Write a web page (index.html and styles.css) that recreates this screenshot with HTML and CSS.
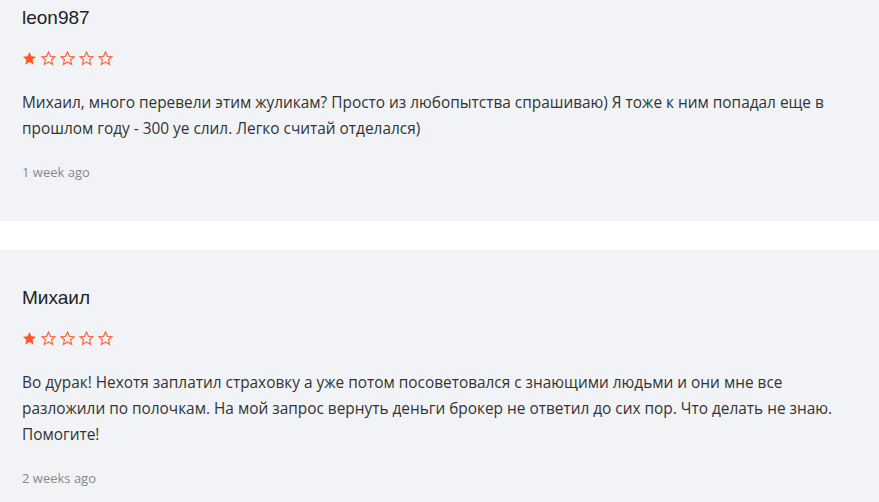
FILE: index.html
```html
<!DOCTYPE html>
<html lang="ru">
<head>
<meta charset="utf-8">
<link rel="stylesheet" href="styles.css">
</head>
<body>
<div class="list">
  <div class="review first">
    <div class="name">leon987</div>
    <div class="stars">
      <svg class="star" viewBox="0 0 24 24"><path class="full" d="M12 1.5l3.1 7 7.4.7-5.6 4.9 1.7 7.4L12 17.6l-6.6 3.9 1.7-7.4L1.5 9.2l7.4-.7z"/></svg>
      <svg class="star" viewBox="0 0 24 24"><path class="empty" d="M12 1.5l3.1 7 7.4.7-5.6 4.9 1.7 7.4L12 17.6l-6.6 3.9 1.7-7.4L1.5 9.2l7.4-.7z"/></svg>
      <svg class="star" viewBox="0 0 24 24"><path class="empty" d="M12 1.5l3.1 7 7.4.7-5.6 4.9 1.7 7.4L12 17.6l-6.6 3.9 1.7-7.4L1.5 9.2l7.4-.7z"/></svg>
      <svg class="star" viewBox="0 0 24 24"><path class="empty" d="M12 1.5l3.1 7 7.4.7-5.6 4.9 1.7 7.4L12 17.6l-6.6 3.9 1.7-7.4L1.5 9.2l7.4-.7z"/></svg>
      <svg class="star" viewBox="0 0 24 24"><path class="empty" d="M12 1.5l3.1 7 7.4.7-5.6 4.9 1.7 7.4L12 17.6l-6.6 3.9 1.7-7.4L1.5 9.2l7.4-.7z"/></svg>
    </div>
    <p class="text">Михаил, много перевели этим жуликам? Просто из любопытства спрашиваю) Я тоже к ним попадал еще в прошлом году - 300 уе слил. Легко считай отделался)</p>
    <div class="date">1 week ago</div>
  </div>
  <div class="review">
    <div class="name">Михаил</div>
    <div class="stars">
      <svg class="star" viewBox="0 0 24 24"><path class="full" d="M12 1.5l3.1 7 7.4.7-5.6 4.9 1.7 7.4L12 17.6l-6.6 3.9 1.7-7.4L1.5 9.2l7.4-.7z"/></svg>
      <svg class="star" viewBox="0 0 24 24"><path class="empty" d="M12 1.5l3.1 7 7.4.7-5.6 4.9 1.7 7.4L12 17.6l-6.6 3.9 1.7-7.4L1.5 9.2l7.4-.7z"/></svg>
      <svg class="star" viewBox="0 0 24 24"><path class="empty" d="M12 1.5l3.1 7 7.4.7-5.6 4.9 1.7 7.4L12 17.6l-6.6 3.9 1.7-7.4L1.5 9.2l7.4-.7z"/></svg>
      <svg class="star" viewBox="0 0 24 24"><path class="empty" d="M12 1.5l3.1 7 7.4.7-5.6 4.9 1.7 7.4L12 17.6l-6.6 3.9 1.7-7.4L1.5 9.2l7.4-.7z"/></svg>
      <svg class="star" viewBox="0 0 24 24"><path class="empty" d="M12 1.5l3.1 7 7.4.7-5.6 4.9 1.7 7.4L12 17.6l-6.6 3.9 1.7-7.4L1.5 9.2l7.4-.7z"/></svg>
    </div>
    <p class="text">Во дурак! Нехотя заплатил страховку а уже потом посоветовался с знающими людьми и они мне все разложили по полочкам. На мой запрос вернуть деньги брокер не ответил до сих пор. Что делать не знаю. Помогите!</p>
    <div class="date">2 weeks ago</div>
  </div>
</div>
</body>
</html>
```
FILE: styles.css
```css
html, body {
  margin: 0;
  padding: 0;
  background: #ffffff;
}
.list {
  display: flex;
  flex-direction: column;
  gap: 29px;
}
.review {
  background: #f2f3f7;
  padding: 36px 35px 40px 22px;
}
.review.first {
  padding-top: 6px;
}
.name {
  font-family: "Liberation Sans", Arial, sans-serif;
  font-size: 19px;
  line-height: 24px;
  color: #222222;
}
.stars {
  display: flex;
  gap: 4px;
  margin-top: 21px;
  height: 15px;
}
.star {
  width: 15px;
  height: 15px;
  display: block;
}
.full {
  fill: #fe5722;
}
.empty {
  fill: none;
  stroke: #fd6a45;
  stroke-width: 2;
  stroke-linejoin: miter;
}
.text {
  margin: 24px 0 0 0;
  font-family: "Open Sans", sans-serif;
  font-size: 15.4px;
  line-height: 26px;
  color: #333333;
}
.date {
  margin-top: 21px;
  font-family: "Open Sans", sans-serif;
  font-size: 13px;
  line-height: 18px;
  color: #888888;
}
```
